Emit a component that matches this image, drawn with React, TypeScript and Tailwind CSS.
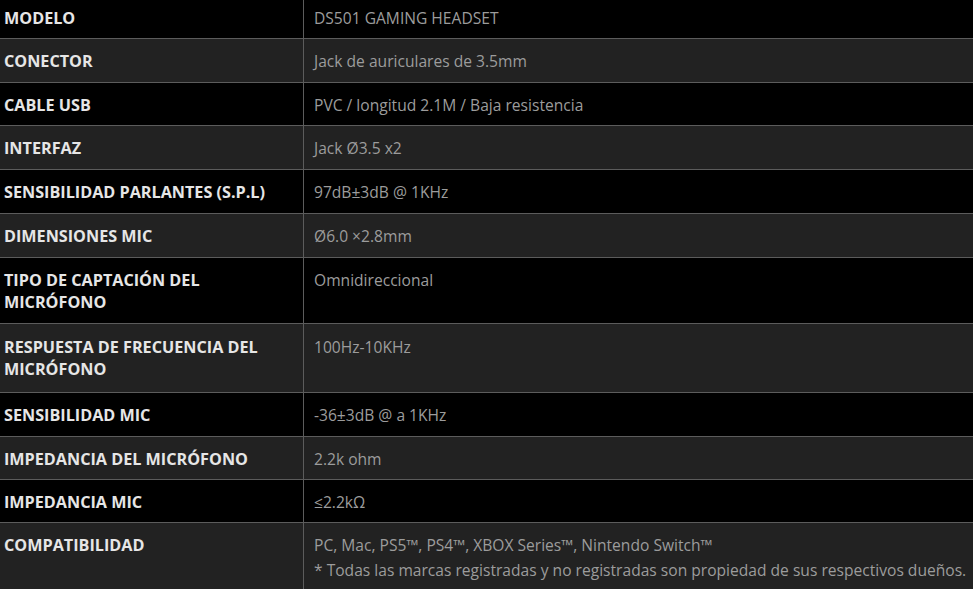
import React from "react";

type Row = {
  label: string[];
  value: string[];
  bg: string;
  pad: string;
};

const BLACK = "bg-black";
const GRAY = "bg-[#222222]";

const rows: Row[] = [
  { label: ["MODELO"], value: ["DS501 GAMING HEADSET"], bg: BLACK, pad: "pt-[7px] pb-[9px]" },
  { label: ["CONECTOR"], value: ["Jack de auriculares de 3.5mm"], bg: GRAY, pad: "pt-[11px] pb-[10px]" },
  { label: ["CABLE USB"], value: ["PVC / longitud 2.1M / Baja resistencia"], bg: BLACK, pad: "pt-[11px] pb-[9px]" },
  { label: ["INTERFAZ"], value: ["Jack Ø3.5 x2"], bg: GRAY, pad: "pt-[11px] pb-[10px]" },
  { label: ["SENSIBILIDAD PARLANTES (S.P.L)"], value: ["97dB±3dB @ 1KHz"], bg: BLACK, pad: "pt-[11px] pb-[10px]" },
  { label: ["DIMENSIONES MIC"], value: ["Ø6.0 ×2.8mm"], bg: GRAY, pad: "pt-[11px] pb-[10px]" },
  { label: ["TIPO DE CAPTACIÓN DEL", "MICRÓFONO"], value: ["Omnidireccional"], bg: BLACK, pad: "pt-[11px] pb-[10px]" },
  { label: ["RESPUESTA DE FRECUENCIA DEL", "MICRÓFONO"], value: ["100Hz-10KHz"], bg: GRAY, pad: "pt-[12px] pb-[12px]" },
  { label: ["SENSIBILIDAD MIC"], value: ["-36±3dB @ a 1KHz"], bg: BLACK, pad: "pt-[11px] pb-[10px]" },
  { label: ["IMPEDANCIA DEL MICRÓFONO"], value: ["2.2k ohm"], bg: GRAY, pad: "pt-[11px] pb-[9px]" },
  { label: ["IMPEDANCIA MIC"], value: ["≤2.2kΩ"], bg: BLACK, pad: "pt-[11px] pb-[9px]" },
  {
    label: ["COMPATIBILIDAD"],
    value: [
      "PC, Mac, PS5™, PS4™, XBOX Series™, Nintendo Switch™",
      "* Todas las marcas registradas y no registradas son propiedad de sus respectivos dueños.",
    ],
    bg: GRAY,
    pad: "pt-[11px] pb-[12px]",
  },
];

export default function App() {
  return (
    <div
      className="w-[973px] min-h-[589px] bg-[#222222] overflow-hidden"
      style={{ fontFamily: '"Open Sans", "Noto Sans", sans-serif' }}
    >
      {rows.map((r, i) => (
        <div
          key={i}
          className={`flex ${r.bg} ${i < rows.length - 1 ? "border-b border-[#5c5c5c]" : ""}`}
        >
          <div
            className={`w-[304px] shrink-0 border-r border-[#5c5c5c] pl-[4px] pr-2 ${r.pad} text-[16.2px] leading-[22px] font-bold text-[#e6e6e6]`}
          >
            {r.label.map((l, j) => (
              <div key={j} className="whitespace-nowrap">{l}</div>
            ))}
          </div>
          <div className={`flex-1 pl-[10px] ${r.pad} text-[15.6px] leading-[22px] text-[#9c9c9c]`}>
            {r.value.map((v, j) => (
              <div key={j} className={j > 0 ? "mt-[3px] whitespace-nowrap" : "whitespace-nowrap"}>
                {v}
              </div>
            ))}
          </div>
        </div>
      ))}
    </div>
  );
}
